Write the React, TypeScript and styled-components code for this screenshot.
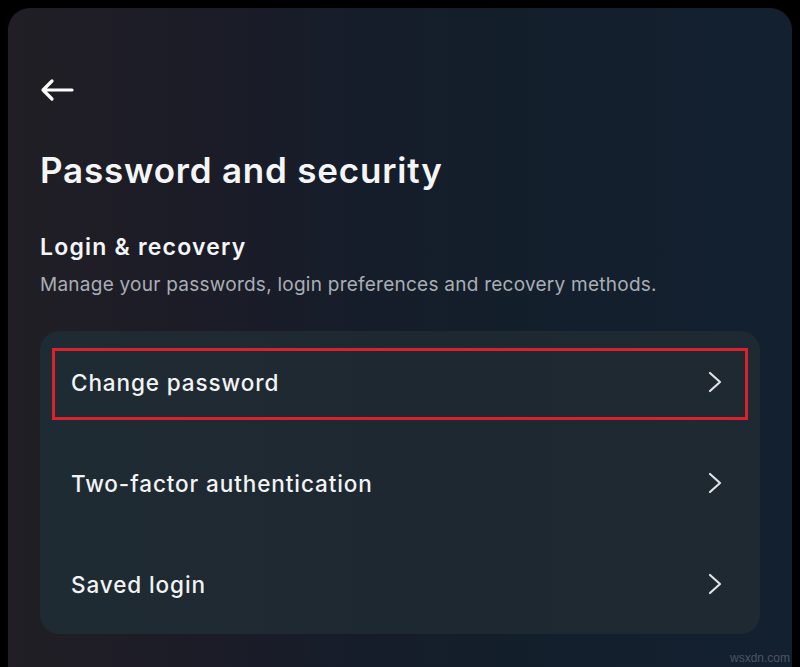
import React from "react";
import styled, { createGlobalStyle } from "styled-components";

const Global = createGlobalStyle`
  html, body { margin: 0; padding: 0; background: #000; }
  body { font-family: Inter, "Open Sans", "Liberation Sans", sans-serif; -webkit-font-smoothing: antialiased; }
  #root { min-height: 667px; }
`;

const Page = styled.div`
  width: 800px;
  height: 667px;
  overflow: hidden;
  background: #000;
  padding: 8px 8px 0 8px;
  box-sizing: border-box;
  position: relative;
`;

const Panel = styled.div`
  height: 700px;
  border-radius: 22px;
  background: linear-gradient(90deg, #211f25 0%, #1c1c27 22%, #161d2a 45%, #131f2c 70%, #132030 100%);
  padding: 62px 32px 0 32px;
  box-sizing: border-box;
  display: flex;
  flex-direction: column;
`;

const BackButton = styled.button`
  width: 40px;
  height: 40px;
  padding: 0;
  background: none;
  border: none;
  display: flex;
  align-items: center;
  justify-content: flex-start;
  color: #fff;
`;

const Title = styled.h1`
  margin: 38px 0 0 0;
  font-size: 35px;
  line-height: 44px;
  font-weight: 600;
  color: #f4f5f7;
  letter-spacing: 0.8px;
`;

const SectionTitle = styled.h2`
  margin: 40px 0 0 0;
  font-size: 23px;
  line-height: 30px;
  font-weight: 600;
  color: #f4f5f7;
  letter-spacing: 1.2px;
`;

const Description = styled.p`
  margin: 10px 0 0 0;
  font-size: 19px;
  line-height: 26px;
  font-weight: 400;
  color: #a9aeb5;
  letter-spacing: 0.25px;
`;

const Card = styled.div`
  margin-top: 33px;
  width: 720px;
  border-radius: 20px;
  background: linear-gradient(90deg, #1f2b33 0%, #1e2830 50%, #1e2931 100%);
  display: flex;
  flex-direction: column;
`;

const Row = styled.div<{ $highlight?: boolean }>`
  position: relative;
  height: 101px;
  display: flex;
  align-items: center;
  justify-content: space-between;
  padding: 1px 38px 0 31px;
  box-sizing: border-box;
  &::after {
    content: "";
    display: ${(p) => (p.$highlight ? "block" : "none")};
    position: absolute;
    left: 12px;
    right: 12px;
    top: 17px;
    bottom: 12px;
    border: 3px solid #d8232e;
    box-sizing: border-box;
  }
`;

const RowLabel = styled.span`
  font-size: 22.5px;
  font-weight: 500;
  color: #f2f3f5;
  letter-spacing: 0.9px;
`;

const Chevron = styled.svg`
  width: 14px;
  height: 22px;
  color: #dfe3e8;
`;

const Watermark = styled.span`
  position: absolute;
  right: 10px;
  bottom: 2px;
  font-family: "Liberation Sans", Arial, sans-serif;
  font-size: 12px;
  color: #4a5560;
`;

const ArrowLeft = () => (
  <svg width="34" height="24" viewBox="0 0 34 24" fill="none">
    <path d="M32 12H3M12 3L3 12l9 9" stroke="#fff" strokeWidth="3.2" strokeLinecap="round" strokeLinejoin="round" />
  </svg>
);

const ChevronRight = () => (
  <Chevron viewBox="0 0 14 22" fill="none">
    <path d="M2 2l10 9-10 9" stroke="currentColor" strokeWidth="2.2" strokeLinecap="round" strokeLinejoin="round" />
  </Chevron>
);

const items = [
  { label: "Change password", highlight: true },
  { label: "Two-factor authentication" },
  { label: "Saved login" },
];

export default function App() {
  return (
    <>
      <Global />
      <Page>
        <Panel>
          <BackButton aria-label="Back">
            <ArrowLeft />
          </BackButton>
          <Title>Password and security</Title>
          <SectionTitle>Login &amp; recovery</SectionTitle>
          <Description>Manage your passwords, login preferences and recovery methods.</Description>
          <Card>
            {items.map((it) => (
              <Row key={it.label} $highlight={it.highlight}>
                <RowLabel>{it.label}</RowLabel>
                <ChevronRight />
              </Row>
            ))}
          </Card>
        </Panel>
        <Watermark>wsxdn.com</Watermark>
      </Page>
    </>
  );
}
